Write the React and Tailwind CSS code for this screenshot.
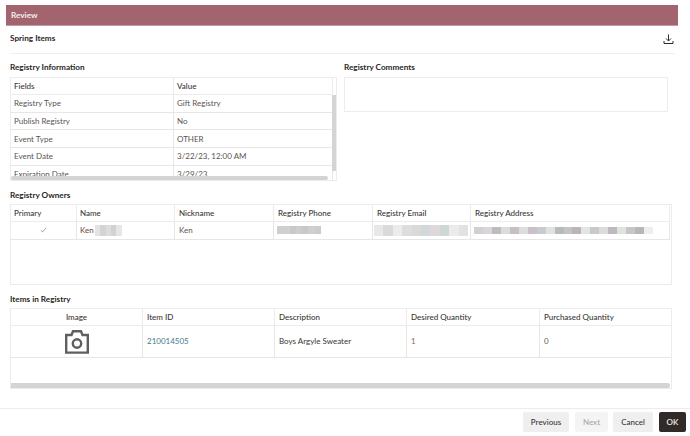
import React from 'react';

const infoRows = [
  ['Registry Type', 'Gift Registry'],
  ['Publish Registry', 'No'],
  ['Event Type', 'OTHER'],
  ['Event Date', '3/22/23, 12:00 AM'],
  ['Expiration Date', '3/29/23'],
];

const nameBlur = ['#e4e4e4', '#d4d4d4', '#dcdcdc', '#d2d2d2', '#e6e6e6'];
const phoneBlur = ['#cfcfcf', '#d2cfcf', '#c9c9c9', '#cdcdcd', '#c8c8c8', '#cfcfcf', '#cccccc'];
const emailBlur = ['#e8e8e8', '#d8dadb', '#ececec', '#dedcdc', '#d8dad8', '#d2d8da', '#ddd8da', '#d0d8d6', '#ebebeb', '#e2e2e2'];
const addressBlur = ['#d3d0d2', '#d8d6da', '#c0bcbe', '#dcdcdc', '#c8bfc6', '#dddddd', '#c9c0c9', '#c8cccc', '#dfe3df', '#b8bcb8', '#c7c3c5', '#b9b5b8', '#e2e5e5', '#c6cbc5', '#dcdcdc', '#bdb9bd', '#e0e3dc', '#c9c4c9', '#b5b8b5', '#eeeeee'];

function Blur({ colors, className }) {
  return (
    <div className={`flex ${className}`}>
      {colors.map((c, i) => (
        <span key={i} className="flex-1 h-full" style={{ backgroundColor: c }} />
      ))}
    </div>
  );
}

function SectionTitle({ children, className = '' }) {
  return <h3 className={`text-[8.2px] leading-[12px] font-bold text-[#2a2725] ${className}`}>{children}</h3>;
}

function Th({ children, className = '', pad = 'px-[3px]' }) {
  return (
    <div className={`h-[17px] flex items-center ${pad} text-[8px] font-medium text-[#3a3633] border-b border-r border-[#ececec] ${className}`}>
      {children}
    </div>
  );
}

function Td({ children, className = '', pad = 'px-[3px]', color = 'text-[#5a5552]' }) {
  return (
    <div className={`flex items-center ${pad} ${color} text-[8px] border-b border-r border-[#e6e6e6] ${className}`}>
      {children}
    </div>
  );
}

function FooterButton({ children, className = '' }) {
  return (
    <button className={`h-[20px] rounded-[2px] text-[8px] font-medium flex items-center justify-center ${className}`}>
      {children}
    </button>
  );
}

export default function App() {
  return (
    <div className="w-[690px] h-[436px] bg-white overflow-hidden pt-[5px] font-['Lato','Noto_Sans',sans-serif]">
      <div className="ml-[6px] mr-[12px] h-[21px] bg-[#a2646f] border-b border-[#c39aa2] flex items-center pl-[5px] text-[8.2px] font-bold text-[#f7eeee]">
        Review
      </div>

      <div className="mx-[10px] w-[665px] h-[28px] border-b border-[#efefef] flex items-center justify-between pb-[3px]">
        <SectionTitle>Spring Items</SectionTitle>
        <svg width="11" height="11" viewBox="0 0 11 11" fill="none" stroke="#2b2b2b" strokeWidth="1" className="mr-[1px] mt-[3px]">
          <path d="M5.5 0.5V6.5M3 4.5L5.5 7L8 4.5" />
          <path d="M1 7V9.5H10V7" />
        </svg>
      </div>

      <div className="pl-[10px] flex gap-[7px] mt-[7px] h-[121px]">
        <div className="w-[327px]">
          <SectionTitle className="mb-[4px]">Registry Information</SectionTitle>
          <div className="relative h-[104px] border border-[#ececec] overflow-hidden">
            <div className="grid grid-cols-[163px_159px]">
              <Th>Fields</Th>
              <Th>Value</Th>
              {infoRows.map(([field, value]) => (
                <React.Fragment key={field}>
                  <Td className="h-[17.7px]">{field}</Td>
                  <Td className="h-[17.7px]">{value}</Td>
                </React.Fragment>
              ))}
            </div>
            <div className="absolute right-0 top-[17px] bottom-[9px] w-[4px] bg-[#d4d4d4]" />
            <div className="absolute left-0 right-[8px] bottom-0 h-[4px] rounded-full bg-[#d4d4d4]" />
          </div>
        </div>
        <div className="w-[324px]">
          <SectionTitle className="mb-[4px]">Registry Comments</SectionTitle>
          <div className="h-[35px] border border-[#ececec]" />
        </div>
      </div>

      <div className="pl-[10px] mt-[7px]">
        <SectionTitle className="mb-[3px]">Registry Owners</SectionTitle>
        <div className="w-[662px] h-[81px] border border-[#ececec]">
          <div className="w-[659px] grid grid-cols-[66px_98px_99px_99px_98px_199px]">
            <Th>Primary</Th>
            <Th>Name</Th>
            <Th pad="px-[4px]">Nickname</Th>
            <Th pad="px-[4px]">Registry Phone</Th>
            <Th pad="px-[4px]">Registry Email</Th>
            <Th pad="px-[4px]">Registry Address</Th>
            <Td className="h-[18px] justify-center pb-[1px]">
              <svg width="7" height="6" viewBox="0 0 7 6" fill="none" stroke="#8a8a8a" strokeWidth="0.8">
                <path d="M0.8 3.3L2.6 5L6.2 0.8" />
              </svg>
            </Td>
            <Td className="h-[18px] pb-[1px]" color="text-[#6b4a3a]">
              Ken
              <Blur colors={nameBlur} className="ml-[1px] w-[27px] h-[11px]" />
            </Td>
            <Td className="h-[18px] pb-[1px]" pad="px-[4px]">Ken</Td>
            <Td className="h-[18px] pb-[1px]" pad="px-[3px]">
              <Blur colors={phoneBlur} className="w-[44px] h-[8px]" />
            </Td>
            <Td className="h-[18px] pb-[1px]" pad="pl-[1px] pr-[2px]">
              <Blur colors={emailBlur} className="w-full h-[11px]" />
            </Td>
            <Td className="h-[18px] pb-[1px]" pad="pl-[3px] pr-[16px]">
              <Blur colors={addressBlur} className="w-full h-[7px]" />
            </Td>
          </div>
        </div>
      </div>

      <div className="pl-[10px] mt-[8px]">
        <SectionTitle className="mb-[3px]">Items in Registry</SectionTitle>
        <div className="relative w-[662px] h-[81px] border border-[#ececec]">
          <div className="grid grid-cols-[132px_132px_132px_133px_131px]">
            <Th className="justify-center">Image</Th>
            <Th pad="px-[4px]">Item ID</Th>
            <Th pad="px-[4px]">Description</Th>
            <Th pad="px-[4px]">Desired Quantity</Th>
            <Th pad="px-[4px]" className="border-r-0">Purchased Quantity</Th>
            <Td className="h-[32px] justify-center">
              <svg width="24" height="24" viewBox="0 0 24 24" fill="none" stroke="#5f5f5f" strokeWidth="2.4">
                <path d="M1.2 22.6V5H6.5L8 1.2H16L17.5 5H22.8V22.6Z" />
                <circle cx="12" cy="13.5" r="4.2" />
              </svg>
            </Td>
            <Td className="h-[32px] pb-[2px]" pad="px-[4px]" color="text-[#3f7a8c]">210014505</Td>
            <Td className="h-[32px] pb-[2px]" pad="px-[4px]" color="text-[#3a3633]">Boys Argyle Sweater</Td>
            <Td className="h-[32px] pb-[2px]" pad="px-[4px]" color="text-[#8a6a4a]">1</Td>
            <Td className="h-[32px] pb-[2px] border-r-0" pad="px-[4px]" color="text-[#6a5a4a]">0</Td>
          </div>
          <div className="absolute left-0 right-[1px] bottom-0 h-[5px] rounded-r-full bg-[#d4d4d4]" />
        </div>
      </div>

      <div className="mt-[19px] border-t border-[#ececec] h-[28px] flex items-start justify-end pt-[3px] pr-[4px]">
        <FooterButton className="w-[46px] bg-[#efefef] text-[#3a3633]">Previous</FooterButton>
        <FooterButton className="w-[33px] ml-[6px] bg-[#f4f4f4] text-[#a9a7a5]">Next</FooterButton>
        <FooterButton className="w-[40px] ml-[5px] bg-[#efefef] text-[#3a3633]">Cancel</FooterButton>
        <FooterButton className="w-[27px] ml-[6px] bg-[#302b28] text-white font-bold">OK</FooterButton>
      </div>
    </div>
  );
}
